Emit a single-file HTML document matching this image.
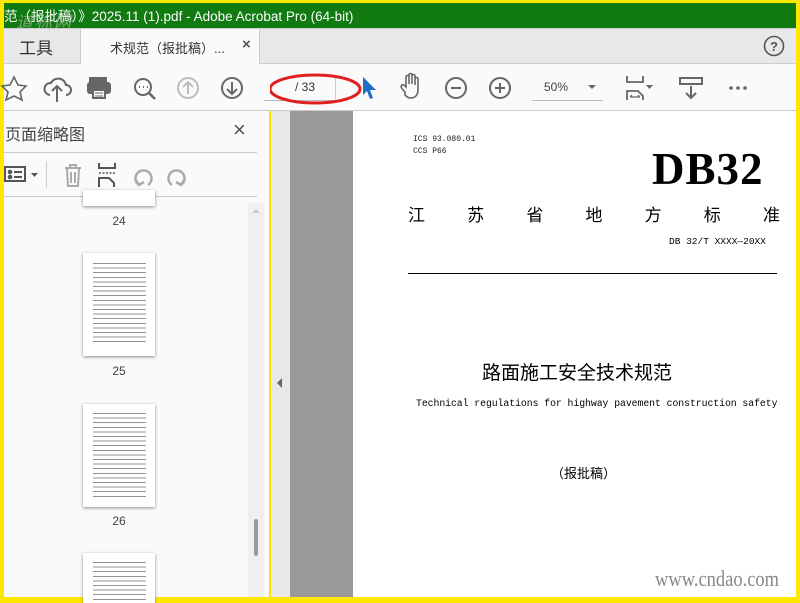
<!DOCTYPE html>
<html><head><meta charset="utf-8">
<style>
*{margin:0;padding:0;box-sizing:border-box}
body{width:800px;height:600px;overflow:hidden;background:#ffe800;position:relative;font-family:"Liberation Sans","Noto Sans CJK SC",sans-serif}
.a{position:absolute}
.thumb{position:absolute;left:83px;width:72px;background:#fff;box-shadow:0 1px 3px rgba(0,0,0,.45);}
.lines{position:absolute;left:10px;right:9px;background:repeating-linear-gradient(to bottom,#777 0,#777 1px,transparent 1px,transparent 4.6px);opacity:.8}
.lbl{position:absolute;left:83px;width:72px;text-align:center;font-size:12px;color:#444}
.cn{font-family:"Liberation Sans","Noto Sans CJK SC",sans-serif}
.mono{font-family:"Liberation Mono","Noto Sans CJK SC",monospace}
</style></head><body>
<div class="a" style="left:4px;top:3px;width:792px;height:25px;background:#117a11"></div>
<div class="a cn" style="left:4px;top:5px;color:#fff;font-size:13.5px;white-space:nowrap">范（报批稿）》2025.11 (1).pdf - Adobe Acrobat Pro (64-bit)</div>
<div class="a cn" style="left:16px;top:8px;color:rgba(200,200,200,.55);font-size:17px;letter-spacing:2px;font-style:italic">道标网</div>
<div class="a" style="left:4px;top:28px;width:792px;height:36px;background:#e8e8e8;border-top:1px solid #ccc;border-bottom:1px solid #ccc"></div>
<div class="a" style="left:80px;top:29px;width:180px;height:35px;background:#fafafa;border-left:1px solid #ccc;border-right:1px solid #ccc"></div>
<div class="a cn" style="left:19px;top:34px;font-size:17px;color:#333">工具</div>
<div class="a cn" style="left:110px;top:38px;font-size:13px;color:#333">术规范（报批稿）...</div>
<div class="a" style="left:242px;top:36px;font-size:15px;color:#555;font-weight:bold">×</div>
<svg class="a" style="left:762px;top:34px" width="24" height="24"><circle cx="12" cy="12" r="9.5" fill="none" stroke="#555" stroke-width="1.6"/><text x="12" y="17" text-anchor="middle" font-size="13" font-weight="bold" fill="#555" font-family="Liberation Sans">?</text></svg>
<div class="a" style="left:4px;top:64px;width:792px;height:47px;background:#fafafa;border-bottom:1px solid #ccc"></div>
<svg class="a" style="left:0;top:72px" width="760" height="34" fill="none" stroke="#666" stroke-width="2">
 <path d="M14 5 L18 13 L26 14 L20 20 L22 28 L14 24 L6 28 L8 20 L2 14 L10 13Z" stroke-width="1.6"/>
 <path d="M50 23 a6 6 0 0 1 1-12 a8 8 0 0 1 15 2 a5 5 0 0 1 0 10" /><path d="M57 30 V15 M52 19 l5-5 5 5"/>
 <rect x="90" y="6" width="16" height="5" fill="#666"/><rect x="88" y="11" width="22" height="10" rx="2" fill="#666"/><rect x="93" y="18" width="12" height="8" fill="#fafafa"/><path d="M95 21h8M95 24h8" stroke-width="1"/>
 <circle cx="143" cy="15" r="8"/><path d="M149 21 l6 6" stroke-width="2.5"/><path d="M139 15h1M143 15h1M147 15h1" stroke-width="2"/>
 <circle cx="188" cy="16" r="10" stroke="#bbb"/><path d="M188 22V10 M183 15l5-5 5 5" stroke="#bbb"/>
 <circle cx="232" cy="16" r="10"/><path d="M232 10v12 M227 17l5 5 5-5"/>
 <path d="M405 20 c-3-3-5-5-3-7 c2-1 3 1 4 2 V5 c0-2 3-2 3 0 v7 V3 c0-2 3-2 3 0 v9 V4 c0-2 3-2 3 0 v9 V7 c0-2 3-2 3 0 v11 c0 5-3 8-7 8 c-3 0-4-1-6-3z" stroke-width="1.6"/>
 <circle cx="456" cy="16" r="10"/><path d="M451 16h10"/>
 <circle cx="500" cy="16" r="10"/><path d="M495 16h10 M500 11v10"/>
 <path d="M627 4v6h16V4 M627 28v-9h11l5 5v4" stroke-width="1.8"/><path d="M630 25h10 M630 25l2-2 M640 25l-2-2" stroke-width="1.2"/>
 <rect x="680" y="6" width="22" height="6" stroke-width="2"/><path d="M691 14v12 M686 21l5 5 5-5"/>
 <circle cx="731" cy="16" r="1.8" fill="#666" stroke="none"/><circle cx="738" cy="16" r="1.8" fill="#666" stroke="none"/><circle cx="745" cy="16" r="1.8" fill="#666" stroke="none"/>
</svg>
<div class="a" style="left:264px;top:100px;width:71px;height:1px;background:#bbb"></div>
<div class="a" style="left:335px;top:77px;width:1px;height:22px;background:#ccc"></div>
<div class="a" style="left:295px;top:80px;font-size:12px;color:#333">/ 33</div>
<svg class="a" style="left:270px;top:70px" width="100" height="40"><ellipse cx="45" cy="19" rx="45" ry="14" fill="none" stroke="#e02020" stroke-width="3"/></svg>
<svg class="a" style="left:362px;top:76px" width="16" height="24"><path d="M1 1 L14 14 L8 14 L11 22 L8 23 L5 15 L1 19Z" fill="#1e6fc8"/></svg>
<div class="a" style="left:544px;top:80px;font-size:12px;color:#444">50%</div>
<div class="a" style="left:532px;top:100px;width:71px;height:1px;background:#bbb"></div>
<svg class="a" style="left:587px;top:84px" width="10" height="8"><path d="M1 1h8l-4 4z" fill="#666"/></svg>
<svg class="a" style="left:645px;top:84px" width="10" height="8"><path d="M1 1h7l-3.5 4z" fill="#666"/></svg>
<div class="a" style="left:4px;top:111px;width:266px;height:486px;background:#fafafa;border-right:1px solid #ccc"></div>
<div class="a cn" style="left:5px;top:121px;font-size:16px;color:#444">页面缩略图</div>
<div class="a" style="left:233px;top:117px;font-size:22px;color:#555">×</div>
<div class="a" style="left:4px;top:152px;width:253px;height:1px;background:#ccc"></div>
<div class="a" style="left:4px;top:196px;width:253px;height:1px;background:#ccc"></div>
<div class="a" style="left:46px;top:161px;width:1px;height:27px;background:#ccc"></div>
<svg class="a" style="left:4px;top:160px" width="190" height="30" fill="none" stroke="#555" stroke-width="2">
 <rect x="1" y="7" width="20" height="14"/><circle cx="6" cy="12" r="1.3" fill="#555"/><circle cx="6" cy="17" r="1.3" fill="#555"/><path d="M10 12h8M10 17h8" />
 <path d="M27 13h7l-3.5 4z" fill="#555" stroke="none"/>
 <g stroke="#aaa"><path d="M61 8h16M66 8V5h6v3 M63 9l1 17h10l1-17 M67 12v11M71 12v11"/></g>
 <path d="M95 3v5h16V3 M95 27v-9h10l5 5v4"/><path d="M95 13h16" stroke-dasharray="2 1.5" stroke-width="1.5"/>
 <g stroke="#aaa" stroke-width="2.5"><path d="M135 25 a8 8 0 1 1 9 0"/><path d="M131 19l4 6 5-3"/><path d="M177 25 a8 8 0 1 0 -9 0"/><path d="M181 19l-4 6 -5-3"/></g>
</svg>
<div class="a" style="left:248px;top:203px;width:16px;height:394px;background:#f0f0f0"></div>
<svg class="a" style="left:251px;top:207px" width="10" height="8"><path d="M1 6h8L5 2z" fill="#ccc"/></svg>
<div class="a" style="left:254px;top:519px;width:4px;height:37px;background:#999;border-radius:2px"></div>
<div class="thumb" style="top:190px;height:16px"></div>
<div class="lbl" style="top:214px">24</div>
<div class="thumb" style="top:253px;height:103px"><div class="lines" style="top:10px;height:82px"></div></div>
<div class="lbl" style="top:364px">25</div>
<div class="thumb" style="top:404px;height:103px"><div class="lines" style="top:9px;height:85px"></div></div>
<div class="lbl" style="top:514px">26</div>
<div class="thumb" style="top:553px;height:50px"><div class="lines" style="top:9px;height:40px"></div></div>
<div class="a" style="left:271px;top:111px;width:19px;height:486px;background:#e8e8e8"></div>
<svg class="a" style="left:276px;top:377px" width="8" height="12"><path d="M6 1v10L1 6z" fill="#666"/></svg>
<div class="a" style="left:290px;top:111px;width:63px;height:486px;background:#999"></div>
<div class="a" style="left:353px;top:111px;width:443px;height:486px;background:#fff"></div>
<div class="a mono" style="left:413px;top:134px;font-size:8px;color:#222;line-height:12px">ICS 93.080.01<br>CCS P66</div>
<div class="a" style="left:652px;top:143px;font-family:'Liberation Serif',serif;font-weight:bold;font-size:45px;color:#000;letter-spacing:1px">DB32</div>
<div class="a cn" style="left:408px;top:201px;width:372px;display:flex;justify-content:space-between;font-size:17px;color:#000"><span>江</span><span>苏</span><span>省</span><span>地</span><span>方</span><span>标</span><span>准</span></div>
<div class="a mono" style="left:669px;top:236px;font-size:9.5px;color:#000">DB 32/T XXXX—20XX</div>
<div class="a" style="left:408px;top:273px;width:369px;height:1px;background:#000"></div>
<div class="a cn" style="left:482px;top:358px;font-size:19px;color:#000">路面施工安全技术规范</div>
<div class="a mono" style="left:416px;top:398px;font-size:9.8px;color:#000;letter-spacing:-0.05px">Technical regulations for highway pavement construction safety</div>
<div class="a cn" style="left:551px;top:463px;font-size:13px;color:#000">（报批稿）</div>
<div class="a" style="left:655px;top:566px;font-family:'Liberation Serif',serif;font-size:22px;color:#888;transform:scaleX(.84);transform-origin:left">www.cndao.com</div>
</body></html>
